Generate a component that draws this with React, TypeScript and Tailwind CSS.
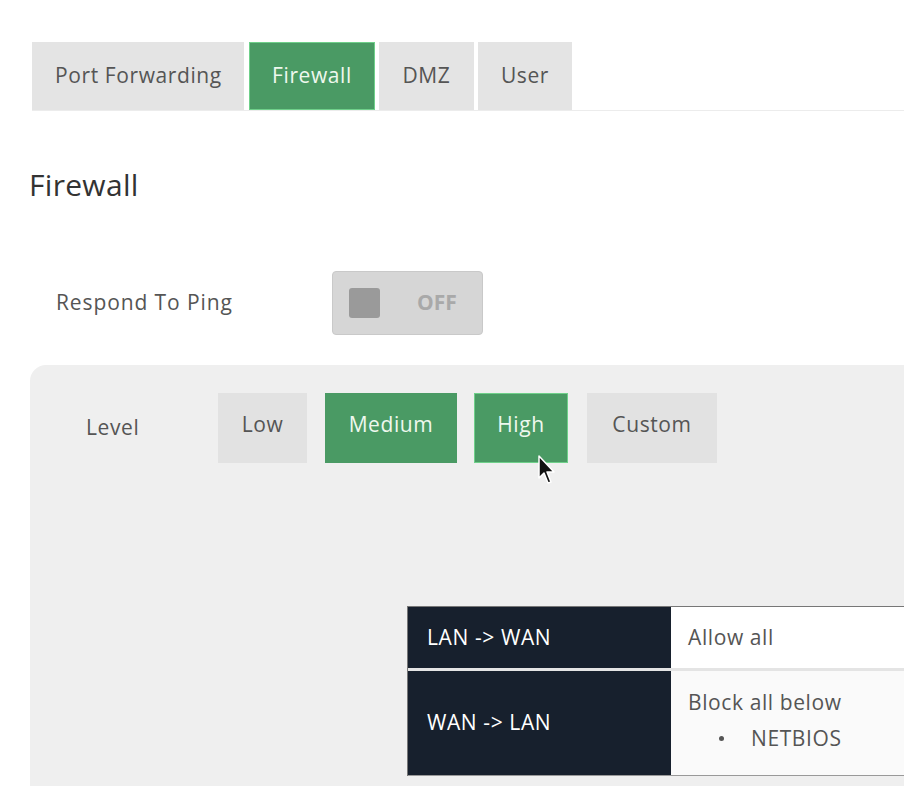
import React from "react";

const font = { fontFamily: "'Open Sans', Lato, 'Liberation Sans', sans-serif" };

function Cursor() {
  return (
    <svg className="absolute left-[538px] top-[455px]" width="18" height="30" viewBox="0 0 18 30">
      <path d="M1 1 L1 23 L6 18 L10 28 L13 27 L9 17 L16 17 Z" fill="#111" stroke="#fff" strokeWidth="1.5" strokeLinejoin="round" />
    </svg>
  );
}

export default function App() {
  return (
    <div className="relative w-[904px] h-[786px] overflow-hidden bg-white text-[#444] tracking-[0.6px]" style={font}>
      {/* Tabs */}
      <div className="pt-[42px] pl-[32px]">
        <div className="flex items-end border-b border-[#ececec]">
          <div className="flex gap-[4px]">
            <div className="w-[212px] h-[68px] bg-[#e4e4e4] flex items-center pl-[23px] text-[21px] text-[#555]">Port Forwarding</div>
            <div className="w-[126px] h-[68px] bg-[#4a9a64] ml-[1px] flex items-center justify-center text-[21px] text-[#eef8ee] border border-[#6fd08a]">Firewall</div>
            <div className="w-[95px] h-[68px] bg-[#e4e4e4] flex items-center justify-center text-[21px] text-[#555]">DMZ</div>
            <div className="w-[94px] h-[68px] bg-[#e4e4e4] flex items-center justify-center text-[21px] text-[#555]">User</div>
          </div>
        </div>
      </div>

      {/* Heading */}
      <div className="pl-[29px] mt-[57px] text-[30px] leading-[34px] tracking-[0.3px] text-[#333]">Firewall</div>

      {/* Respond to ping */}
      <div className="flex items-center mt-[69px] h-[64px]">
        <div className="w-[332px] pl-[56px] text-[21px] text-[#555] tracking-[0.9px]">Respond To Ping</div>
        <div className="w-[151px] h-[64px] rounded-[4px] bg-[#d6d6d6] border border-[#c9c9c9] flex items-center pl-[16px]">
          <div className="w-[31px] h-[30px] rounded-[3px] bg-[#9a9a9a]" />
          <div className="ml-[37px] text-[21px] font-bold tracking-[0px] text-[#a9a9a9]">OFF</div>
        </div>
      </div>

      {/* Panel */}
      <div className="ml-[30px] mt-[30px] h-[430px] rounded-tl-[16px] bg-[#efefef] pt-[28px]">
        <div className="flex items-center h-[70px]">
          <div className="w-[188px] pl-[56px] text-[21px] text-[#555]">Level</div>
          <div className="flex">
            <div className="w-[89px] h-[70px] bg-[#e2e2e2] flex items-center justify-center text-[21px] text-[#555] pb-[6px]">Low</div>
            <div className="w-[132px] h-[70px] ml-[18px] bg-[#4a9a64] flex items-center justify-center text-[21px] text-[#eef8ee] pb-[6px]">Medium</div>
            <div className="w-[94px] h-[70px] ml-[17px] bg-[#4a9a64] border border-[#6fd08a] flex items-center justify-center text-[21px] text-[#eef8ee] pb-[6px]">High</div>
            <div className="w-[130px] h-[70px] ml-[19px] bg-[#e2e2e2] flex items-center justify-center text-[21px] text-[#555] pb-[6px]">Custom</div>
          </div>
        </div>

        {/* Table */}
        <div className="ml-[377px] mt-[143px] w-[520px] border-t border-l border-[#777]">
          <div className="flex h-[64px] border-b-[3px] border-[#e4e4e4]">
            <div className="w-[263px] bg-[#17202d] text-white text-[21px] flex items-center pl-[19px]">LAN -&gt; WAN</div>
            <div className="flex-1 bg-white text-[21px] text-[#555] flex items-center pl-[17px]">Allow all</div>
          </div>
          <div className="flex h-[105px] border-b border-[#999]">
            <div className="w-[263px] bg-[#17202d] text-white text-[21px] flex items-center pl-[19px]">WAN -&gt; LAN</div>
            <div className="flex-1 bg-[#fafafa] text-[21px] text-[#555] pl-[17px] pt-[13px] leading-[36px]">
              <div>Block all below</div>
              <div className="flex items-center">
                <span className="ml-[31px] w-[5px] h-[5px] rounded-full bg-[#555]" />
                <span className="ml-[27px]">NETBIOS</span>
              </div>
            </div>
          </div>
        </div>
      </div>

      <Cursor />
    </div>
  );
}
